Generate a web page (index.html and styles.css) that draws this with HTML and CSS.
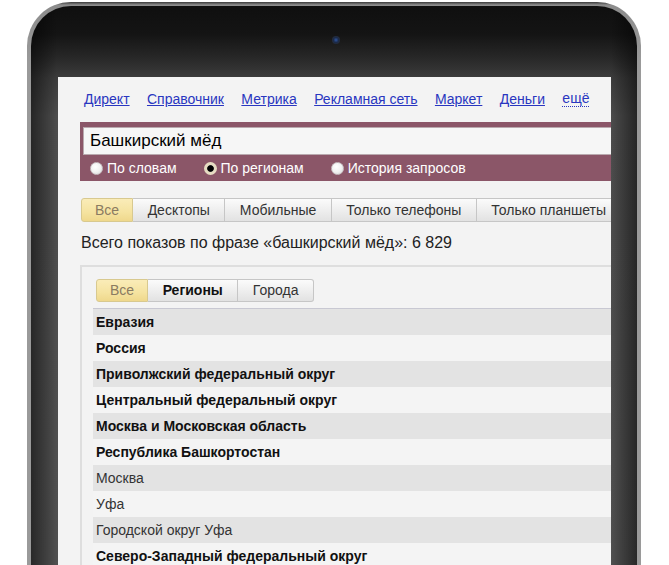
FILE: index.html
```html
<!DOCTYPE html>
<html lang="ru">
<head>
<meta charset="utf-8">
<title>Подбор слов</title>
<link rel="stylesheet" href="styles.css">
</head>
<body>
<div class="device">
  <div class="bezel">
    <div class="camera"></div>
    <div class="screen">
      <nav class="nav">
        <a href="#">Директ</a>
        <a href="#">Справочник</a>
        <a href="#">Метрика</a>
        <a href="#">Рекламная сеть</a>
        <a href="#">Маркет</a>
        <a href="#">Деньги</a>
        <a href="#" class="more">ещё</a>
      </nav>
      <div class="search">
        <div class="query">Башкирский мёд</div>
        <div class="modes">
          <label class="mode"><span class="radio"></span>По словам</label>
          <label class="mode"><span class="radio checked"></span>По регионам</label>
          <label class="mode"><span class="radio"></span>История запросов</label>
        </div>
      </div>
      <div class="tabs">
        <span class="tab active">Все</span>
        <span class="tab">Десктопы</span>
        <span class="tab">Мобильные</span>
        <span class="tab">Только телефоны</span>
        <span class="tab">Только планшеты</span>
      </div>
      <p class="total">Всего показов по фразе «башкирский мёд»: 6 829</p>
      <div class="panel">
        <div class="tabs small">
          <span class="tab active">Все</span>
          <span class="tab bold">Регионы</span>
          <span class="tab">Города</span>
        </div>
        <div class="table">
          <div class="row b">Евразия</div>
          <div class="row b">Россия</div>
          <div class="row b">Приволжский федеральный округ</div>
          <div class="row b">Центральный федеральный округ</div>
          <div class="row b">Москва и Московская область</div>
          <div class="row b">Республика Башкортостан</div>
          <div class="row">Москва</div>
          <div class="row">Уфа</div>
          <div class="row">Городской округ Уфа</div>
          <div class="row b">Северо-Западный федеральный округ</div>
        </div>
      </div>
    </div>
  </div>
</div>
</body>
</html>
```
FILE: styles.css
```css
html, body {
  margin: 0;
  padding: 0;
  background: #fff;
  height: 565px;
  overflow: hidden;
}
body {
  font-family: "Liberation Sans", Arial, sans-serif;
}
.device {
  box-sizing: border-box;
  width: 614px;
  height: 563px;
  margin: 2px 0 0 27px;
  padding: 4px 4px 0 4px;
  border-radius: 44px 44px 0 0;
  background:
    linear-gradient(to bottom, #3a3a3a 0, #8c8c8c 3px, #9a9a9a 60px),
    #999;
}
.bezel {
  box-sizing: border-box;
  height: 100%;
  padding: 30px 26px 0 27px;
  border-radius: 40px 40px 0 0;
  background:
    linear-gradient(to right, rgba(0,0,0,.5) 0, rgba(0,0,0,0) 26px, rgba(0,0,0,0) calc(100% - 26px), rgba(0,0,0,.5) 100%),
    linear-gradient(to bottom, #0f0f0f 0, #141414 28px, #262626 50px, #3c3c3c 72px, #4c4c4c 110px, #505050 100%);
}
.camera {
  width: 8px;
  height: 8px;
  margin: 0 auto 33px;
  border-radius: 50%;
  background: radial-gradient(circle, #2f55a0 0, #1b2a48 45%, #2e2e2e 100%);
  position: relative;
  left: 1px;
}
.screen {
  box-sizing: border-box;
  width: 553px;
  height: 488px;
  background: #f3f3f3;
  overflow: hidden;
  padding-left: 22px;
}
.nav {
  display: flex;
  gap: 17.4px;
  padding: 14px 0 0 4px;
  font-size: 14px;
  line-height: 16px;
  white-space: nowrap;
}
.nav a {
  color: #2936c0;
}
.nav a.more {
  text-decoration: none;
  border-bottom: 1px dotted #2936c0;
  line-height: 15px;
}
.search {
  width: 620px;
  margin-top: 15px;
  padding: 5px 0 0 3px;
  background: #8b5668;
}
.query {
  box-sizing: border-box;
  height: 28px;
  border: 1px solid #b9a9ae;
  background: #f6f6f6;
  padding-left: 6px;
  font-size: 17px;
  line-height: 26px;
  color: #000;
}
.modes {
  display: flex;
  align-items: center;
  gap: 27px;
  height: 26px;
  padding-left: 7px;
  color: #fff;
  font-size: 14px;
  white-space: nowrap;
}
.mode {
  display: flex;
  align-items: center;
  gap: 4px;
}
.radio {
  box-sizing: border-box;
  width: 13px;
  height: 13px;
  border-radius: 50%;
  background: radial-gradient(circle at 40% 35%, #fff 0, #f2f2f2 50%, #d6d6d6 100%);
  border: 1px solid #c9c0c3;
}
.radio.checked {
  border: 3px solid #e6dcc2;
  background: radial-gradient(circle, #000 0, #000 55%, #444 70%, #e6dcc2 75%);
}
.tabs {
  display: flex;
  margin: 17px 0 0 1px;
  white-space: nowrap;
}
.tab {
  box-sizing: border-box;
  height: 24px;
  padding: 0 14.5px;
  border: 1px solid #c6c6c6;
  border-left: none;
  background: linear-gradient(to bottom, #fbfbfb 0, #ececec 60%, #e2e2e2 100%);
  font-size: 14px;
  line-height: 22px;
  color: #333;
}
.tab:first-child {
  border-left: 1px solid #c6c6c6;
  border-radius: 3px 0 0 3px;
  padding: 0 13px;
}
.tab:last-child {
  border-radius: 0 3px 3px 0;
}
.tab.active {
  background: linear-gradient(to bottom, #faecb8 0, #f5e3a0 60%, #efd88c 100%);
  border-color: #d8c98f;
  color: #8a7b62;
}
.tab.bold {
  font-weight: bold;
  color: #111;
}
.total {
  margin: 11px 0 0 1px;
  font-size: 16px;
  line-height: 20px;
  color: #222;
}
.panel {
  width: 640px;
  margin-top: 12px;
  padding-top: 12px;
  border-top: 2px solid #dedede;
  border-left: 2px solid #dedede;
}
.tabs.small {
  margin: 0 0 0 14px;
}
.tabs.small .tab {
  height: 23px;
  line-height: 21px;
}
.table {
  margin: 6px 0 0 11px;
  border-top: 1px solid #c8c8d2;
}
.row {
  height: 26px;
  line-height: 26px;
  padding-left: 3px;
  font-size: 14px;
  color: #333;
  white-space: nowrap;
}
.row:nth-child(odd) {
  background: #e3e3e3;
}
.row:nth-child(even) {
  background: #f4f4f4;
}
.row.b {
  font-weight: bold;
  color: #111;
}
```
